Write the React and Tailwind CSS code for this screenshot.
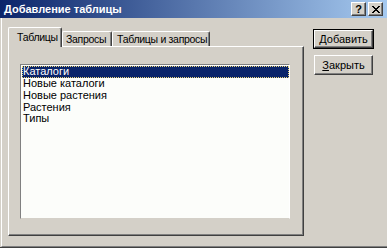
import React from "react";

const font = { fontFamily: '"Liberation Sans", Arial, sans-serif' };

function Tab({ label, selected, width, textPl }) {
  return (
    <div
      className={
        "relative flex flex-col overflow-hidden whitespace-nowrap rounded-tl-[2px] rounded-tr-[2px] border-l border-t border-white bg-[#d4d0c8] shadow-[inset_-1px_0_#808080] " +
        (selected ? "z-10 -mb-[1px] h-[20px] border-r border-r-[#404040]" : "h-[15px] border-r border-r-[#404040]")
      }
      style={{ width }}
    >
      <span
        className={"text-[10.5px] leading-[11px] tracking-[-0.3px] text-black " + (selected ? "mt-[4px]" : "mt-[2px]")}
        style={{ paddingLeft: textPl }}
      >
        {label}
      </span>
    </div>
  );
}

function Btn({ children, isDefault, mt }) {
  const inner = (
    <div className="flex h-full w-full items-center justify-center border-l border-t border-white border-r border-b border-r-[#404040] border-b-[#404040] shadow-[inset_-1px_-1px_#808080] text-[11px] leading-[11px] text-black">
      {children}
    </div>
  );
  return isDefault ? (
    <div className={"h-[20px] w-[61px] border border-black " + mt}>{inner}</div>
  ) : (
    <div className={"ml-[1px] h-[20px] w-[59px] " + mt}>{inner}</div>
  );
}

export default function App() {
  const items = ["Каталоги", "Новые каталоги", "Новые растения", "Растения", "Типы"];
  return (
    <div className="flex h-[248px] w-[387px] flex-col overflow-hidden bg-[#d4d0c8]" style={font}>
      {/* title bar */}
      <div className="flex h-[18px] items-center bg-[linear-gradient(to_right,#0a246a,#a6caf0)] pl-[4px] pr-[4px]">
        <span className="flex-1 whitespace-nowrap text-[11px] font-bold leading-[12px] text-white">Добавление таблицы</span>
        <div className="flex h-[14px] w-[15px] items-center justify-center border-l border-t border-white border-r border-b border-r-[#404040] border-b-[#404040] bg-[#d4d0c8] shadow-[inset_-1px_-1px_#808080]">
          <span className="text-[11px] font-bold leading-[11px] text-black">?</span>
        </div>
        <div className="ml-[2px] flex h-[14px] w-[15px] items-center justify-center border-l border-t border-white border-r border-b border-r-[#404040] border-b-[#404040] bg-[#d4d0c8] shadow-[inset_-1px_-1px_#808080]">
          <svg width="8" height="7" viewBox="0 0 8 7">
            <path d="M0 0h2v1h-2zM6 0h2v1h-2zM1 1h2v1h-2zM5 1h2v1h-2zM2 2h4v1h-4zM3 3h2v1h-2zM2 4h4v1h-4zM1 5h2v1h-2zM5 5h2v1h-2zM0 6h2v1h-2zM6 6h2v1h-2z" fill="#000" />
          </svg>
        </div>
      </div>

      {/* body */}
      <div className="flex flex-1 border-b border-[#404040] pl-[1px]">
        <div className="flex flex-1 border-b border-l border-[#808080] border-l-white pl-[6px] pt-[9px]">
          {/* tab control */}
          <div className="flex w-[296px] flex-col">
            <div className="flex items-end">
              <Tab label="Таблицы" selected width={54} textPl={8} />
              <Tab label="Запросы" width={50} textPl={3} />
              <Tab label="Таблицы и запросы" width={98} textPl={4} />
            </div>
            <div className="flex h-[190px] flex-col border-l border-t border-white border-r border-b border-r-[#404040] border-b-[#404040] pl-[11px] pt-[17px] shadow-[inset_-1px_-1px_#808080]">
              <div className="h-[155px] w-[270px] border-l border-t border-[#808080] border-r border-b border-r-white border-b-[#d4d0c8] bg-[#fcfdfa] pl-[1px] pt-[1px]">
                {items.map((t, i) => (
                  <div
                    key={t}
                    className={
                      "flex h-[11.75px] items-center whitespace-nowrap text-[11px] leading-[11px] " +
                      (i === 0
                        ? "bg-[#0a246a] text-white outline outline-1 -outline-offset-1 outline-dotted outline-[#e8d37a]"
                        : "text-black")
                    }
                  >
                    <span className="pl-[1px]">{t}</span>
                  </div>
                ))}
              </div>
            </div>
          </div>

          {/* buttons */}
          <div className="ml-[9px] flex flex-col">
            <Btn isDefault mt="mt-[2px]">
              <span>
                <span className="underline">Д</span>обавить
              </span>
            </Btn>
            <Btn mt="mt-[6px]">
              <span>
                <span className="underline">З</span>акрыть
              </span>
            </Btn>
          </div>
        </div>
      </div>
    </div>
  );
}
